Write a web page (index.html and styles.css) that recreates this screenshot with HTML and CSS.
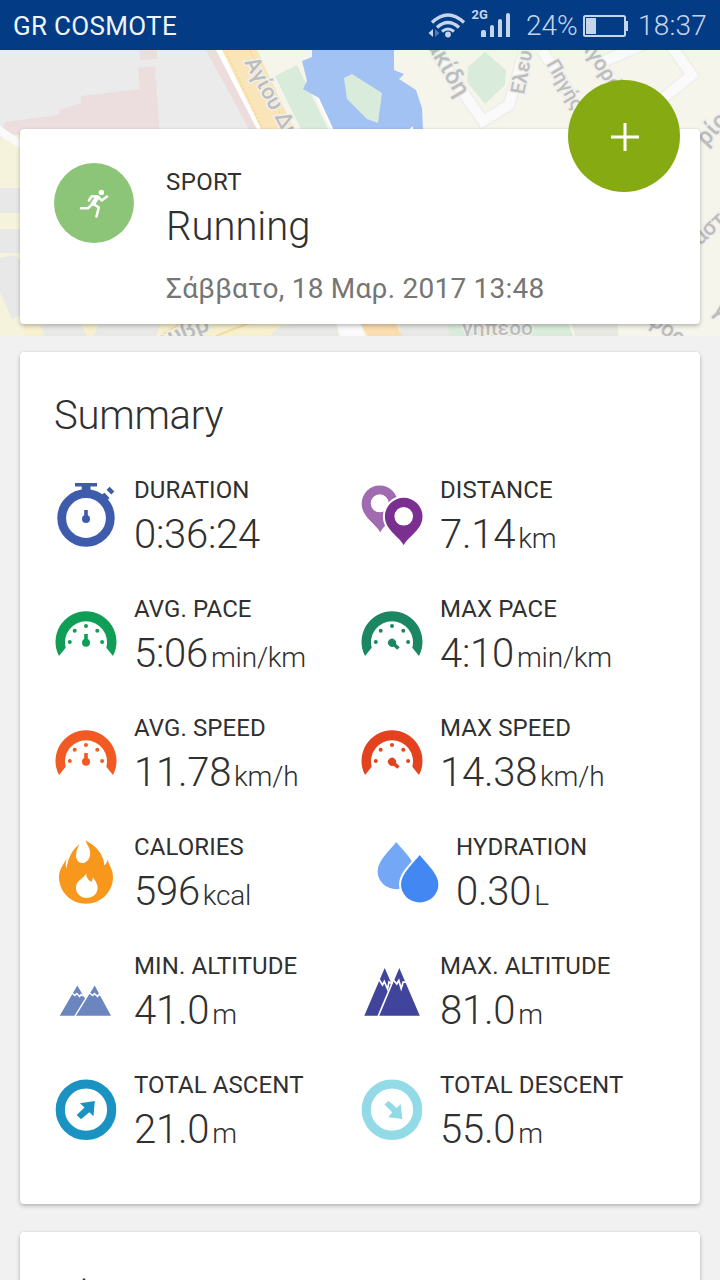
FILE: index.html
```html
<!DOCTYPE html>
<html lang="el">
<head>
<meta charset="utf-8">
<title>Workout summary</title>
<link rel="stylesheet" href="styles.css">
</head>
<body>
<svg class="defs" width="0" height="0" aria-hidden="true">
  <symbol id="dial" viewBox="0 0 64 72">
    <path d="M5 57A30.500 30.500 0 1 1 59 57L52.300 48.700A21 21 0 1 0 11.700 48.700Z"/>
    <circle cx="32" cy="27" r="2"/><circle cx="20.7" cy="31.7" r="2"/><circle cx="43.3" cy="31.7" r="2"/><circle cx="15.8" cy="43" r="2"/><circle cx="48.1" cy="43" r="2"/>
  </symbol>
  <symbol id="hand" viewBox="0 0 64 72">
    <circle cx="32" cy="43.7" r="4"/><path d="M30.2 35h3.6v8h-3.6z"/>
  </symbol>
</svg>

<header class="status">
  <span class="carrier">GR COSMOTE</span>
  <svg class="radio" width="84" height="50" viewBox="428 0 84 50">
    <g fill="none" stroke="#c5d6ec" stroke-width="3.4">
      <path d="M432 22.5Q448 7.5 464 22.5"/><path d="M437 27.5Q448 17.5 459 27.5"/><path d="M442 31.5Q448 26.5 454 31.5" stroke-width="3"/>
    </g>
    <circle cx="448" cy="34.5" r="2.9" fill="#c5d6ec"/>
    <path d="M428.500 33l4.500-4v8z" fill="#c5d6ec"/><path d="M439.500 33l-4.500-4v8z" fill="#5379b0"/>
    <text class="net" x="471.500" y="19">2G</text>
    <path d="M481 32q0-2 2-2h1q2 0 2 2v5h-5zM490 27q0-2 2-2t2 2v10h-4zM498 21q0-2 2-2t2 2v16h-4zM506 15q0-2 2-2t2 2v22h-4z" fill="#c5d6ec"/>
  </svg>
  <span class="percent">24%</span>
  <svg class="battery" width="46" height="24" viewBox="0 0 46 24">
    <rect x="1" y="2" width="41" height="20" rx="1.500" fill="none" stroke="#c5d6ec" stroke-width="2"/>
    <path d="M42 7h3v10h-3zM3 4h10v16H3z" fill="#c5d6ec"/>
  </svg>
  <span class="clock">18:37</span>
</header>

<section class="hero">
  <svg class="map" width="720" height="286" viewBox="0 50 720 286">
    <path fill="#f5f5eb" d="M0 50h720v286H0z"/>
    <path fill="#ebebeb" d="M0 50h212l52 90H0z"/>
    <path fill="#ecdedf" d="M139 50h18v9l-17 1zM138 68l17-2 5 69H0l5-13 54-7v-5l22-7v-7l59-7z"/>
    <path fill="#ecdcdc" d="M206 50h14l43 85h-11z"/>
    <path fill="#fff" d="M216 50h9l42 85h-7z"/>
    <path fill="#f9e5b8" d="M222 50h35l39 83h-33z"/>
    <path fill="none" stroke="#f0d18e" stroke-dasharray="2 2" d="M226 52l38 80M250 50l38 80"/>
    <path fill="#d9ebda" d="M275 76l22-11 34 70h-27z"/>
    <path fill="#fff" d="M316 97l4-1 18 38h-5z"/>
    <path fill="#a3c2f4" d="M312 50h82v20l10 4-5 5 17 11 6 18 1 21-4 6h-83l-17-37-16-9 4-8-5-20 10-4z"/>
    <path fill="#d9ebda" d="M344 78l8-4 30 19-4 30-11-4-20-20z"/>
    <path fill="#fff" d="M405 133l8-7v7z"/>
    <g fill="none" stroke="#eeeeea" stroke-width="13"><path d="M435 52l48 69 26-16 16-55M542 50l28 43M602 62l62-26 28 39-30 24M590 52l24 30"/></g>
    <g fill="none" stroke="#fafafa" stroke-width="10"><path d="M435 52l48 69 26-16 16-55M542 50l28 43M602 62l62-26 28 39-30 24M590 52l24 30"/></g>
    <path fill="#d9ebda" d="M485 52l21 18-1 15-20 19-18-22 1-15z"/>
    <path fill="#f6f3dc" d="M0 139l28-7v204H0z"/>
    <path fill="#fafafa" d="M0 126l24 16v9L0 136z"/>
    <path fill="#e8e8e8" d="M0 188h24v25H0zM0 229h24v24H0zM0 258l14-3 12 9-2 50-12 5-12-27z"/>
    <path fill="#f6f0cf" d="M24 320h456v16H24z"/>
    <path fill="#e8e8e6" d="M40 325l39-4 8 15H45zM100 320h62l-6 16h-62zM270 336l10-10 56-7 2 17zM400 320h50v16h-50z"/>
    <path fill="#fafafa" d="M335 320h25l5 16h-25z"/>
    <path fill="#f9ddb0" d="M358 320h36l8 16h-34z"/>
    <path fill="#d9ebda" d="M446 320h121l6 16H450z"/>
    <path fill="#e8e8e3" d="M570 320h48v16h-43z"/>
    <path fill="none" stroke="#f5dda0" stroke-width="2" d="M160 336l23-14M216 336l33-13"/>
    <g class="street">
      <text transform="translate(244 62) rotate(61)" font-size="22">Αγίου Δη</text>
      <text transform="translate(420 34) rotate(60)" font-size="24">νακίδη</text>
      <text transform="translate(524 95) rotate(-79)" font-size="20">Ελευθ</text>
      <text transform="translate(546 64) rotate(60)" font-size="19">Πηγής</text>
      <text transform="translate(580 44) rotate(57)" font-size="21">αγορά</text>
      <text transform="translate(706 147) rotate(-48)" font-size="24">ρίου</text>
      <text transform="translate(700 246) rotate(-43)" font-size="22">αστ</text>
      <text transform="translate(712 310) rotate(50)" font-size="24">γ</text>
      <text transform="translate(158 351) rotate(-22)" font-size="25">ουβρ</text>
      <text x="462" y="335" font-size="21">γήπεδο</text>
      <text transform="translate(646 322) rotate(36)" font-size="22">φορι</text>
    </g>
  </svg>
  <article class="card sport">
    <svg class="avatar" width="80" height="80" viewBox="0 0 80 80">
      <circle cx="40" cy="40" r="40" fill="#8dc578"/>
      <circle cx="47.400" cy="29.500" r="2.700" fill="#fff"/>
      <g fill="none" stroke="#fff" stroke-width="2.600" stroke-linecap="round" stroke-linejoin="round">
        <path d="M43 33.300l-5.500.2-2.600 4M45 34.500l2.700 3 5.300-4M39.500 41l5.300 3.500-2.300 9M38.500 41l-4.500 4.200-7 .1"/>
        <path d="M43.200 34.500l-4 6" stroke-width="4.600"/>
      </g>
    </svg>
    <div>
      <p class="label">SPORT</p>
      <h1 class="value name">Running</h1>
      <p class="date">Σάββατο, 18 Μαρ. 2017 13:48</p>
    </div>
  </article>
  <button class="fab" aria-label="Add"><svg width="28" height="28" viewBox="0 0 28 28"><path d="M12.500 0h3v28h-3zM0 12.500h28v3H0z" fill="#fff"/></svg></button>
</section>

<article class="card summary">
  <h2 class="title">Summary</h2>
  <div class="stats">
    <div class="stat">
      <svg class="icon" viewBox="0 0 64 72" fill="#3e5cab"><circle cx="32" cy="38" r="24.300" fill="none" stroke="#3e5cab" stroke-width="8.800"/><path d="M21 3h22v3.400h-6.500V11h-8.800V6.400H21z"/><circle cx="32" cy="39" r="4"/><path d="M30.200 30h3.600v8h-3.600zM46.500 15.500l4-2.800 5 5.300-3.600 3.600zM52.500 9.700l3.200-2.900 4.600 4.600-3 3.200z"/></svg>
      <div><p class="label">DURATION</p><p class="value">0:36:24</p></div>
    </div>
    <div class="stat">
      <svg class="icon" viewBox="0 0 64 72"><path fill="#a06bb0" fill-rule="evenodd" d="M20.300 52.300C15 43 1.700 37 1.700 23.500a18 18 0 0 1 36 0C37.700 37 25 43 20.300 52.300zM10.700 23.300a9 9 0 1 0 18 0a9 9 0 1 0-18 0z"/><path fill="#7b2f91" stroke="#fff" stroke-width="4" paint-order="stroke" d="M43.700 65.300C39 56 24.900 50 24.900 36.500a18.800 18.800 0 0 1 37.600 0C62.500 50 48.400 56 43.700 65.300z"/><circle cx="43.700" cy="36.300" r="9.300" fill="#fff"/></svg>
      <div><p class="label">DISTANCE</p><p class="value">7.14<small>km</small></p></div>
    </div>
    <div class="stat">
      <svg class="icon" viewBox="0 0 64 72" fill="#109e57"><use href="#dial"/><use href="#hand"/></svg>
      <div><p class="label">AVG. PACE</p><p class="value">5:06<small>min/km</small></p></div>
    </div>
    <div class="stat">
      <svg class="icon" viewBox="0 0 64 72" fill="#1b8762"><use href="#dial"/><use href="#hand" transform="rotate(132 32 43.700)"/></svg>
      <div><p class="label">MAX PACE</p><p class="value">4:10<small>min/km</small></p></div>
    </div>
    <div class="stat">
      <svg class="icon" viewBox="0 0 64 72" fill="#f15a22"><use href="#dial"/><use href="#hand"/></svg>
      <div><p class="label">AVG. SPEED</p><p class="value">11.78<small>km/h</small></p></div>
    </div>
    <div class="stat">
      <svg class="icon" viewBox="0 0 64 72" fill="#e2431e"><use href="#dial"/><use href="#hand" transform="rotate(132 32 43.700)"/></svg>
      <div><p class="label">MAX SPEED</p><p class="value">14.38<small>km/h</small></p></div>
    </div>
    <div class="stat">
      <svg class="icon" viewBox="0 0 64 72"><path fill="#f7981d" d="M31.700 3.500C41 8 50 17 50.300 28.500C52 27 53.300 25 53.700 22.300C54.500 28 59 32 59 40C59 55 47 66.700 32 66.700S5 55 5 40C5 32 10 27 12.700 21.300C11.700 25 11.500 28 12.300 31.500C14.500 21 17 14 25.700 6.700C22.500 12.500 21.700 17 22.300 21C23.200 25.700 27.500 27 31 25.500C36.300 23 37.500 16 34.800 10.500C33.700 8 32.200 6 31.700 3.500z"/><path fill="#fff" d="M32.300 36.200C31.900 39.500 34 43 37.300 44.800C38.800 43.500 38.700 41.500 38.500 40.300C41 43 43.600 47 43.600 50.800C43.600 57 38.600 61 32.700 61S21.900 56.500 21.900 50.500C21.900 43.500 30 41.500 32.300 36.200z"/></svg>
      <div><p class="label">CALORIES</p><p class="value">596<small>kcal</small></p></div>
    </div>
    <div class="stat shifted">
      <svg class="icon" viewBox="0 0 64 72"><path fill="#75a7f7" d="M20.300 5C26 13 39 23 39 34.500a18.700 17.700 0 0 1-37.400 0C1.600 23 14.600 13 20.300 5z"/><path fill="#4287f2" stroke="#fff" stroke-width="4" paint-order="stroke" d="M43.700 18C49.400 26 62.400 36 62.400 47.500a18.700 17.900 0 0 1-37.400 0C25 36 38 26 43.700 18z"/></svg>
      <div><p class="label">HYDRATION</p><p class="value">0.30<small>L</small></p></div>
    </div>
    <div class="stat">
      <svg class="icon" viewBox="0 0 64 72"><path fill="#6b86be" d="M5.700 59.800L23.300 29.500L31 42.500L20.400 59.800zM22 59.800L40.700 29.500L57 59.800z"/><path fill="none" stroke="#fff" stroke-width="1.500" d="M17.500 36.500l3.300 3 2-2 2.800 3 1.500-2 2.500 1.500M34.700 36.500l4 3 1.800-2 3 3 1.200-2 3 1"/></svg>
      <div><p class="label">MIN. ALTITUDE</p><p class="value">41.0<small>m</small></p></div>
    </div>
    <div class="stat">
      <svg class="icon" viewBox="0 0 64 72"><path fill="#40449b" d="M4.300 59.800L24.700 12L31.200 27L17.500 59.800zM19.300 59.800L39.300 12L59.800 59.800z"/><path fill="none" stroke="#fff" stroke-width="1.700" d="M18.500 22.500l4 6.500 1.800-3.500 3.200 7.500 1.500-7 3 2M33 23.500l3.800 4.500 2-3.500 2.400 8 2-6.500 4 .5"/></svg>
      <div><p class="label">MAX. ALTITUDE</p><p class="value">81.0<small>m</small></p></div>
    </div>
    <div class="stat">
      <svg class="icon" viewBox="0 0 64 72"><circle cx="32" cy="34.700" r="25.700" fill="none" stroke="#1b93c2" stroke-width="9.200"/><path fill="#1b93c2" d="M40.800 26L39.500 41.200L35.300 37.200L27 44.300L22.700 40L30.500 32.500L26 28.200z"/></svg>
      <div><p class="label">TOTAL ASCENT</p><p class="value">21.0<small>m</small></p></div>
    </div>
    <div class="stat">
      <svg class="icon" viewBox="0 0 64 72"><circle cx="32" cy="34.700" r="25.700" fill="none" stroke="#93dae7" stroke-width="9.200"/><path fill="#93dae7" d="M42.300 44L40.700 29L36.700 33L28.500 25.700L24.500 29.500L32.300 37.500L28 42.300z"/></svg>
      <div><p class="label">TOTAL DESCENT</p><p class="value">55.0<small>m</small></p></div>
    </div>
  </div>
</article>

<article class="card next"><h2 class="title">Charts</h2></article>
</body>
</html>
```
FILE: styles.css
```css
* { box-sizing: border-box; }
body {
  margin: 0;
  height: 1280px;
  overflow: hidden;
  background: #f1f1f1;
  color: #303030;
  font-family: Roboto, "Noto Sans", sans-serif;
}
p, h1, h2 { margin: 0; font-weight: 400; }
.defs { position: absolute; }
.status {
  display: flex;
  align-items: center;
  height: 50px;
  padding: 2px 13px 0;
  background: #033b84;
  color: #c5d6ec;
  font-size: 28px;
  line-height: 48px;
  white-space: nowrap;
}
.carrier { width: 415px; color: #eef4fc; font-size: 26px; letter-spacing: .3px; }
.radio { flex: none; margin-top: -2px; }
.net { fill: #c5d6ec; font: 700 13px Roboto, sans-serif; }
.percent { width: 57px; margin-left: 14px; font-weight: 300; }
.battery { flex: none; margin-top: -1px; }
.clock { margin-left: 9px; font-weight: 300; letter-spacing: .2px; }
.hero { position: relative; height: 286px; padding: 79px 20px 12px; }
.map { position: absolute; inset: 0; }
.street text {
  fill: #bdbdbd;
  stroke: #f0f0ec;
  stroke-width: 3px;
  paint-order: stroke;
  font-family: Roboto, sans-serif;
  font-weight: 500;
}
.card {
  background: #fff;
  border-radius: 4px;
  box-shadow: 0 2px 4px rgba(0, 0, 0, .24), 0 0 2px rgba(0, 0, 0, .08);
}
.sport {
  position: relative;
  display: flex;
  gap: 32px;
  height: 195px;
  padding: 34px;
}
.avatar { flex: none; }
.sport .label { margin-top: 5px; letter-spacing: .4px; }
.label { font-size: 24px; line-height: 28px; letter-spacing: .1px; white-space: nowrap; }
.value, .title { font-size: 40px; font-weight: 300; line-height: 47px; letter-spacing: -.25px; white-space: nowrap; }
.value { margin-top: 7px; }
.sport .name { margin-top: 7px; letter-spacing: 0; }
.value small { margin-left: 3px; font-size: 28px; letter-spacing: -.2px; }
.date { margin-top: 22px; color: #757575; font-size: 28px; line-height: 33px; letter-spacing: .24px; white-space: nowrap; }
.fab {
  position: absolute;
  top: 30px;
  left: 568px;
  display: grid;
  place-items: center;
  width: 112px;
  height: 112px;
  padding: 1px 0 0 1px;
  border: 0;
  border-radius: 50%;
  background: #86aa12;
}
.summary { height: 852px; margin: 16px 20px 0; padding: 40px 34px; }
.stats {
  display: grid;
  grid-template-columns: 306px 306px;
  row-gap: 36px;
  margin-top: 37px;
}
.stat { display: flex; gap: 16px; height: 83px; }
.shifted { padding-left: 16px; }
.icon { flex: none; width: 64px; height: 72px; margin-top: 4px; }
.next { height: 48px; margin: 28px 20px 0; padding: 40px 34px 0; border-radius: 4px 4px 0 0; overflow: hidden; }
```
